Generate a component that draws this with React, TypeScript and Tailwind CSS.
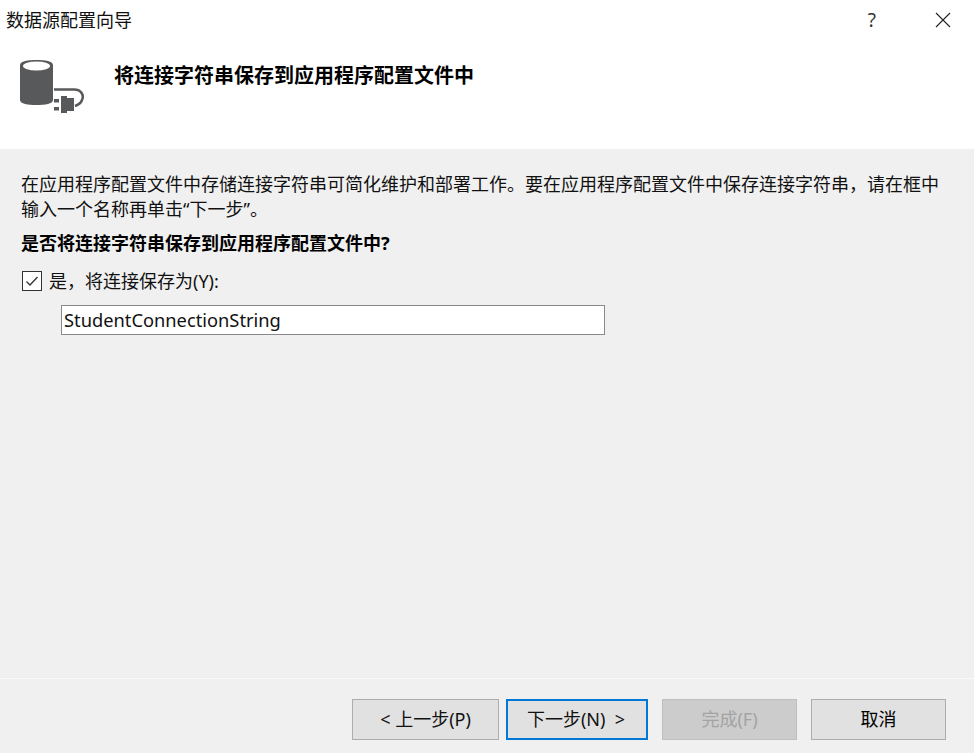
import React from "react";

function Btn({ children, cls }: { children: React.ReactNode; cls: string }) {
  return <div className={"h-[41px] flex items-center justify-center text-[18px] " + cls}>{children}</div>;
}

export default function App() {
  return (
    <div className="w-[974px] h-[753px] flex flex-col bg-[#f0f0f0] overflow-hidden text-[18px] text-[#111111] font-['Noto_Sans','Noto_Sans_CJK_SC',sans-serif]">
      <div className="h-[149px] bg-white flex flex-col shrink-0">
        <div className="h-[40px] flex items-center pl-[6px] pr-[23px]">
          <span className="text-[18px] leading-[28px]">数据源配置向导</span>
          <span className="ml-auto mr-[59px] text-[19px] text-[#333333]">?</span>
          <svg width="16" height="16" viewBox="0 0 16 16" fill="none" stroke="#222" strokeWidth="1.1"><path d="M1 1 L15 15 M15 1 L1 15" /></svg>
        </div>
        <div className="flex pl-[19px] pt-[19px]">
          <svg width="66" height="56" viewBox="0 0 66 56" fill="none" className="shrink-0">
            <path d="M1 6 C1 2 9 1 17.5 1 C26 1 34 2 34 6 V41 C34 45 26 46 17.5 46 C9 46 1 45 1 41 Z" fill="#58595b" />
            <ellipse cx="17.5" cy="7" rx="13.5" ry="4.5" fill="#ffffff" />
            <path d="M35 30.5 H55 C63 30.5 65 37 63 41 C62 44 59 46 56 47" stroke="#58595b" strokeWidth="2.5" />
            <rect x="47" y="39" width="8" height="13" fill="#58595b" />
            <rect x="42" y="37" width="6" height="17" fill="#58595b" />
            <rect x="35" y="40" width="5" height="3.5" fill="#58595b" />
            <rect x="35" y="48" width="5" height="3.5" fill="#58595b" />
          </svg>
          <div className="ml-[29px] text-[20px] leading-[34px] font-bold text-black">将连接字符串保存到应用程序配置文件中</div>
        </div>
      </div>
      <div className="flex-1 pl-[21px] pr-[20px] pt-[23px]">
        <p className="leading-[25px] w-[925px]">在应用程序配置文件中存储连接字符串可简化维护和部署工作。要在应用程序配置文件中保存连接字符串，请在框中输入一个名称再单击“下一步”。</p>
        <p className="font-bold mt-[9px] leading-[25px] text-black">是否将连接字符串保存到应用程序配置文件中?</p>
        <div className="flex items-center mt-[13px] h-[24px] pl-[1px]">
          <div className="w-[20px] h-[20px] border border-[#333333] bg-white flex items-center justify-center">
            <svg width="16" height="16" viewBox="0 0 16 16" fill="none" stroke="#333" strokeWidth="1.3"><path d="M2.5 8.5 L6 12 L13.5 4" /></svg>
          </div>
          <span className="ml-[7px]">是，将连接保存为(Y):</span>
        </div>
        <div className="ml-[40px] mt-[12px] w-[544px] h-[30px] border border-[#8a8a8a] bg-white flex items-center pl-[2px] text-[18.3px]">StudentConnectionString</div>
      </div>
      <div className="h-[75px] shrink-0 border-t border-[#fafafa] flex items-start justify-end pt-[20px] pr-[28px]">
        <Btn cls="w-[147px] bg-[#e1e1e1] border border-[#adadad]">&lt;&nbsp;上一步(P)</Btn>
        <Btn cls="w-[142px] ml-[7px] bg-[#e1e1e1] border-2 border-[#0078d7] pr-[2px]">下一步(N)&nbsp;&nbsp;&gt;</Btn>
        <Btn cls="w-[135px] ml-[14px] bg-[#cccccc] border border-[#bfbfbf] text-[#a3a3a3]">完成(F)</Btn>
        <Btn cls="w-[135px] ml-[14px] bg-[#e1e1e1] border border-[#adadad] text-black">取消</Btn>
      </div>
    </div>
  );
}
